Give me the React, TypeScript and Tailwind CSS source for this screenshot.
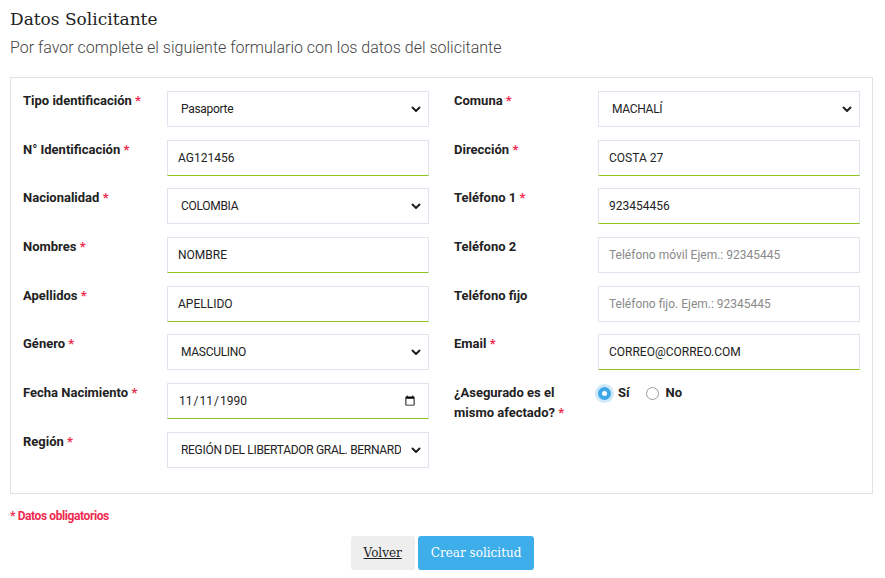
import { useState } from "react";

type Field = {
  label: string;
  required?: boolean;
  kind: "select" | "text" | "date" | "radio";
  value?: string;
  placeholder?: string;
  filled?: boolean;
};

const left: Field[] = [
  { label: "Tipo identificación", required: true, kind: "select", value: "Pasaporte" },
  { label: "N° Identificación", required: true, kind: "text", value: "AG121456", filled: true },
  { label: "Nacionalidad", required: true, kind: "select", value: "COLOMBIA" },
  { label: "Nombres", required: true, kind: "text", value: "NOMBRE", filled: true },
  { label: "Apellidos", required: true, kind: "text", value: "APELLIDO", filled: true },
  { label: "Género", required: true, kind: "select", value: "MASCULINO" },
  { label: "Fecha Nacimiento", required: true, kind: "date", value: "1990-11-11", filled: true },
  { label: "Región", required: true, kind: "select", value: "REGIÓN DEL LIBERTADOR GRAL. BERNARDO O'HIGGINS" },
];

const right: Field[] = [
  { label: "Comuna", required: true, kind: "select", value: "MACHALÍ" },
  { label: "Dirección", required: true, kind: "text", value: "COSTA 27", filled: true },
  { label: "Teléfono 1", required: true, kind: "text", value: "923454456", filled: true },
  { label: "Teléfono 2", kind: "text", placeholder: "Teléfono móvil Ejem.: 92345445" },
  { label: "Teléfono fijo", kind: "text", placeholder: "Teléfono fijo. Ejem.: 92345445" },
  { label: "Email", required: true, kind: "text", value: "CORREO@CORREO.COM", filled: true },
  { label: "¿Asegurado es el mismo afectado?", required: true, kind: "radio" },
];

function Chevron() {
  return (
    <svg
      className="pointer-events-none absolute right-[7px] top-1/2 -translate-y-1/2"
      width="12"
      height="12"
      viewBox="0 0 24 24"
      fill="none"
      stroke="#222"
      strokeWidth="4"
      strokeLinecap="round"
      strokeLinejoin="round"
    >
      <path d="M5 9l7 7 7-7" />
    </svg>
  );
}

function Control({ field }: { field: Field }) {
  const [val, setVal] = useState(field.value ?? "");
  const [yes, setYes] = useState(true);

  if (field.kind === "radio") {
    return (
      <div className="flex items-center gap-[16px] text-[13px] font-bold leading-[20px] text-[#222]">
        <label className="flex items-center gap-[7px]">
          <span className="flex h-[13px] w-[13px] items-center justify-center rounded-full bg-[#3ea7e8] shadow-[0_0_0_3px_rgba(62,167,232,0.25)]" onClick={() => setYes(true)}>
            {yes && <span className="h-[5px] w-[5px] rounded-full bg-white" />}
          </span>
          Sí
        </label>
        <label className="flex items-center gap-[7px]">
          <span className="h-[13px] w-[13px] rounded-full border border-[#9a9a9a] bg-white" onClick={() => setYes(false)} />
          No
        </label>
      </div>
    );
  }

  if (field.kind === "select") {
    return (
      <div className="relative h-[36px]">
        <select
          value={val}
          onChange={(e) => setVal(e.target.value)}
          className="h-full w-full appearance-none overflow-hidden whitespace-nowrap border border-[#e1e3ee] bg-white pl-[13px] pr-[27px] text-[12px] tracking-[-0.3px] text-[#222] outline-none [text-overflow:clip]"
        >
          <option value={val}>{val}</option>
        </select>
        <Chevron />
      </div>
    );
  }

  return (
    <input
      type={field.kind === "date" ? "date" : "text"}
      value={val}
      placeholder={field.placeholder}
      onChange={(e) => setVal(e.target.value)}
      className={
        "h-[36px] w-full border border-[#e1e3ee] bg-white px-[10px] text-[12px] text-[#222] outline-none placeholder:text-[#8a8a8a] " +
        (field.filled ? "border-b-[#8dc21f]" : "")
      }
    />
  );
}

function Row({ field }: { field: Field }) {
  return (
    <div className="flex">
      <div className="w-[144px] shrink-0 pr-[16px] text-[13px] font-bold leading-[20px] text-[#222]">
        {field.label}
        {field.required && <span className="text-[#ef2a4f]"> *</span>}
      </div>
      <div className="min-w-0 flex-1">
        <Control field={field} />
      </div>
    </div>
  );
}

export default function App() {
  return (
    <main className="bg-white px-[10px] pt-[6px] font-['Roboto',sans-serif] text-[#222]">
      <h1 className="font-['DejaVu_Serif',serif] text-[17px] leading-[26px] text-[#222]">Datos Solicitante</h1>
      <p className="mt-[5px] text-[16px] font-light leading-[22px] text-[#444]">
        Por favor complete el siguiente formulario con los datos del solicitante
      </p>

      <section className="mt-[18px] w-[863px] border border-[#e2e2e2] px-[12px] pb-[25px] pt-[13px]">
        <div className="grid grid-cols-2 gap-x-[25px]">
          <div className="flex flex-col gap-[12.7px]">
            {left.map((f) => (
              <Row key={f.label} field={f} />
            ))}
          </div>
          <div className="flex flex-col gap-[12.7px]">
            {right.map((f) => (
              <Row key={f.label} field={f} />
            ))}
          </div>
        </div>
      </section>

      <p className="mt-[13px] text-[12px] font-bold tracking-[-0.4px] text-[#ef2a4f]">* Datos obligatorios</p>

      <div className="mt-[11px] flex justify-center gap-[3px] pb-[7px]">
        <button className="h-[34px] rounded-[3px] bg-[#eeeeee] px-[13px] font-['DejaVu_Serif',serif] text-[12px] text-[#222] underline">
          Volver
        </button>
        <button className="h-[34px] rounded-[3px] bg-[#3eaeea] px-[13px] font-['DejaVu_Serif',serif] text-[12px] text-white">
          Crear solicitud
        </button>
      </div>
    </main>
  );
}
